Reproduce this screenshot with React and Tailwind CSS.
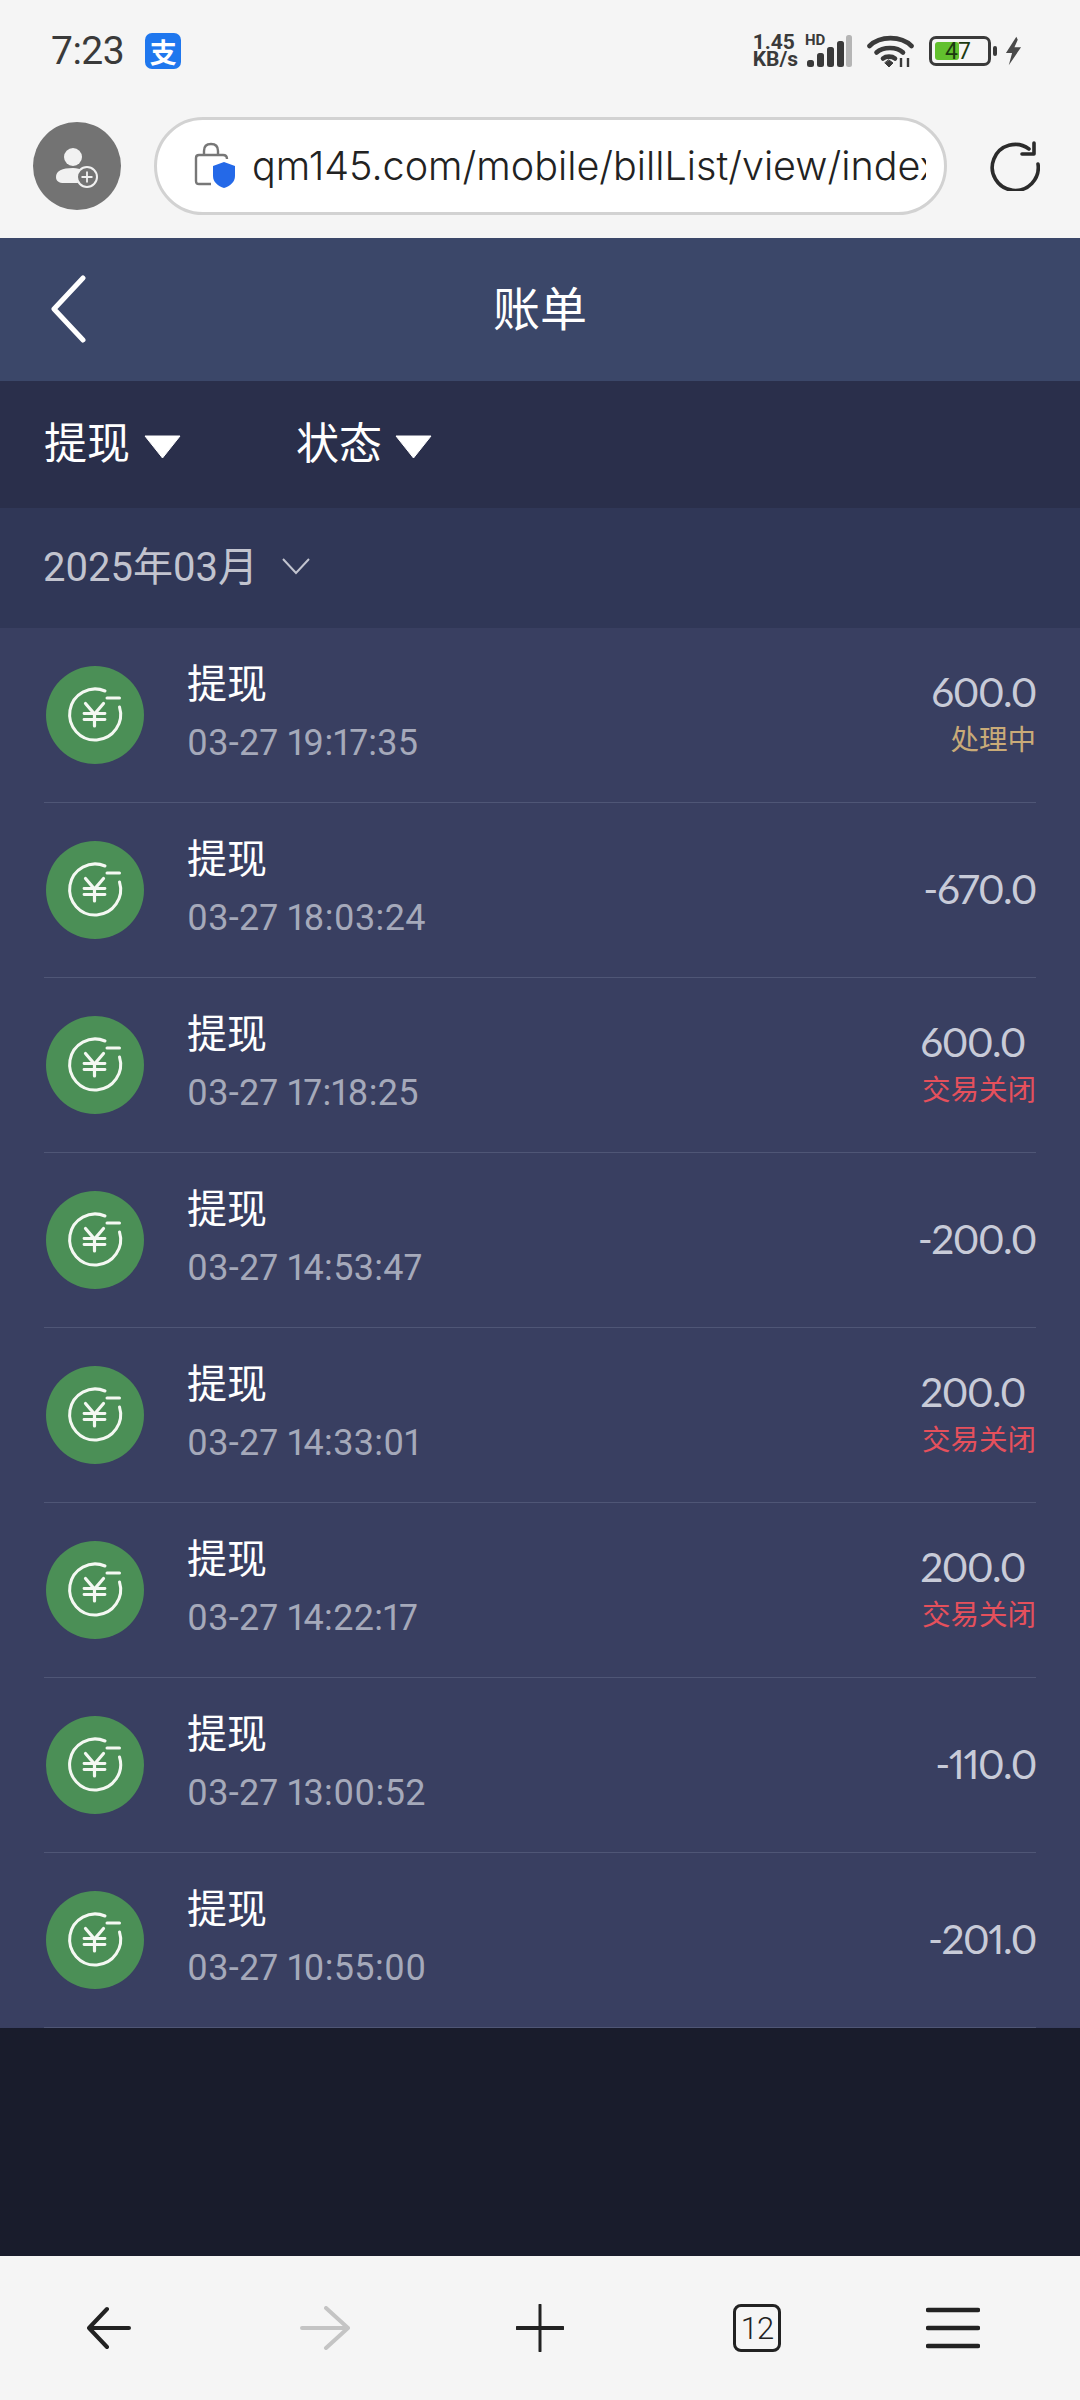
const rows = [
  { t: "03-27 19:17:35", a: "600.0", s: "处理中", c: "text-[#c9ab78]" },
  { t: "03-27 18:03:24", a: "-670.0" },
  { t: "03-27 17:18:25", a: "600.0", s: "交易关闭", c: "text-[#e5505c]", shift: true },
  { t: "03-27 14:53:47", a: "-200.0" },
  { t: "03-27 14:33:01", a: "200.0", s: "交易关闭", c: "text-[#e5505c]", shift: true },
  { t: "03-27 14:22:17", a: "200.0", s: "交易关闭", c: "text-[#e5505c]", shift: true },
  { t: "03-27 13:00:52", a: "-110.0" },
  { t: "03-27 10:55:00", a: "-201.0" },
];

function YuanIcon() {
  return (
    <div className="w-[98px] h-[98px] rounded-full bg-[#4b8f56] flex items-center justify-center shrink-0">
      <svg width="98" height="98" viewBox="0 0 98 98" fill="none" stroke="#f4f8f2" strokeLinecap="round">
        <path d="M59 25 A25.5 25.5 0 1 0 73.5 41" strokeWidth="3" />
        <path d="M61 32 H73.5" strokeWidth="3" />
        <path d="M39.5 37.5 L48.5 48 L57.5 37.5 M48.5 48 V60" strokeWidth="3.2" />
        <path d="M38 47.5 H59 M38 53.5 H59" strokeWidth="2.8" />
      </svg>
    </div>
  );
}

function Row({ r }) {
  return (
    <div className="h-[175px] border-b border-[#4f5676] flex items-center">
      <div className="pl-[2px] w-[143px] shrink-0">
        <YuanIcon />
      </div>
      <div className="flex-1 -mt-[2px]">
        <div className="text-[40px] leading-[58px] text-white">提现</div>
        <div className="text-[36px] leading-[58px] text-[#a5a9ba] proportional-nums tracking-[0.3px]">{r.t}</div>
      </div>
      <div className={`flex flex-col items-end ${r.s ? "mt-[2px]" : "-mt-[2px]"}`}>
        <div className={`text-[40.5px] leading-[46px] text-[#c8cbd8] font-['Lato',sans-serif] proportional-nums tracking-[-1.4px] ${r.shift ? "pr-[11px]" : ""}`}>{r.a}</div>
        {r.s && <div className={`mt-[3px] text-[28.5px] leading-[46px] ${r.c}`}>{r.s}</div>}
      </div>
    </div>
  );
}

function Tri() {
  return <svg className="block" width="37" height="24" viewBox="0 0 37 24"><path d="M1 1 H36 L18.5 23 Z" fill="#fff" stroke="#fff" strokeWidth="1" strokeLinejoin="round" /></svg>;
}

export default function App() {
  return (
    <div className="w-[1080px] h-[2400px] flex flex-col bg-[#191c2c] overflow-hidden font-['Roboto','Noto_Sans_CJK_SC',sans-serif]">
      {/* status bar */}
      <div className="h-[102px] bg-[#f5f5f5] flex items-center pl-[51px] shrink-0">
        <span className="text-[39px] leading-none text-[#3a3a3a] tracking-[-0.5px]">7:23</span>
        <div className="ml-[21px] w-[36px] h-[36px] rounded-[7px] bg-[#1f77ee] flex items-center justify-center text-white text-[27px] leading-none font-bold font-['Noto_Sans_CJK_SC',sans-serif]">支</div>
        <div className="ml-auto flex items-center mr-[58px]">
          <div className="flex flex-col text-[#3a3a3a] font-bold text-[21px] leading-[17px] items-start">
            <span>1.45</span>
            <span>KB/s</span>
          </div>
          <div className="relative ml-[7px] w-[48px] h-[34px]">
            <span className="absolute left-0 -top-[1px] text-[15px] leading-none font-bold text-[#3a3a3a]">HD</span>
            <svg className="absolute left-0 top-0" width="48" height="34" viewBox="0 0 48 34">
              <rect x="2" y="26" width="7" height="7" rx="2.5" fill="#3a3a3a" />
              <rect x="12" y="19" width="7" height="14" rx="2.5" fill="#3a3a3a" />
              <rect x="22" y="13" width="7" height="20" rx="2.5" fill="#3a3a3a" />
              <rect x="32" y="7" width="7" height="26" rx="2.5" fill="#3a3a3a" />
              <rect x="41" y="1" width="6" height="32" rx="2.5" fill="#b5b5b5" />
            </svg>
          </div>
          <svg className="ml-[14px]" width="47" height="34" viewBox="0 0 47 34" fill="none" stroke="#3a3a3a" strokeWidth="4.6" strokeLinecap="round">
            <path d="M2.5 12 C13 1.5 34 1.5 44.5 12" />
            <path d="M9.5 18.5 C16 12.5 30 12.5 36 18.5" />
            <path d="M16 24.5 C19 22 25 22 28 24.5" />
            <path d="M18 29 L22 33 L26 29 L22 26 Z" fill="#3a3a3a" strokeWidth="1" />
            <path d="M34 24 V33 M41 24 V33" strokeWidth="2.4" strokeLinecap="butt" />
          </svg>
          <div className="ml-[15px] relative w-[62px] h-[30px] rounded-[7px] border-[3px] border-[#3a3a3a] flex items-center justify-center overflow-hidden">
            <div className="absolute left-[3px] top-[3px] bottom-[3px] w-[24px] bg-[#62c02e] rounded-[3px]" />
            <span className="relative text-[23px] leading-none text-[#1c3a10] -ml-[4px]">47</span>
          </div>
          <div className="ml-[2px] w-[4px] h-[10px] rounded-[2px] bg-[#3a3a3a]" />
          <svg className="ml-[8px]" width="17" height="30" viewBox="0 0 18 30">
            <path d="M12 0 L1 17 H7.5 L4 30 L17 11 H10 L13.5 3 Z" fill="#4a4a4a" />
          </svg>
        </div>
      </div>

      {/* url bar */}
      <div className="h-[136px] bg-[#f5f5f5] flex items-center pl-[33px] pb-[9px] shrink-0">
        <div className="w-[88px] h-[88px] rounded-full bg-[#737373] flex items-center justify-center shrink-0">
          <svg width="48" height="44" viewBox="0 0 48 44">
            <circle cx="20" cy="13" r="9" fill="#f1f1f1" />
            <path d="M3 33 C3 27 9 24 20 24 C24 24 27 25 30 26 C26 29 24 34 25 39 H11 C6 39 3 37 3 33 Z" fill="#f1f1f1" />
            <circle cx="34" cy="33" r="10" fill="#737373" stroke="#f1f1f1" strokeWidth="2" />
            <path d="M34 27.5 V38.5 M28.5 33 H39.5" stroke="#f1f1f1" strokeWidth="1.8" />
          </svg>
        </div>
        <div className="ml-[33px] w-[793px] h-[98px] rounded-full bg-white border-[3px] border-[#d2d2d2] flex items-center pl-[37px] pr-[18px] shrink-0">
          <svg className="shrink-0" width="44" height="48" viewBox="0 0 44 48" fill="none">
            <path d="M10 13 V9 C10 4 13 2 17 2 C21 2 24 4 24 9 V13" stroke="#777" strokeWidth="2.4" />
            <path d="M17 42 H5 C3 42 2 41 2 39 V16 C2 14 3 13 5 13 H29 C32 13 33 14 33 17" stroke="#777" strokeWidth="2.4" />
            <path d="M30 20 L41 24 V34 C41 40 36 44 30 46 C24 44 19 40 19 34 V24 Z" fill="#2469e8" />
          </svg>
          <div className="ml-[14px] min-w-0 flex-1 text-[39.5px] leading-[48px] text-[#222] whitespace-nowrap overflow-hidden font-['Inter',sans-serif] font-light">qm145.com/mobile/billList/view/index</div>
        </div>
        <svg className="ml-[43px]" width="50" height="50" viewBox="0 0 50 50" fill="none" stroke="#2b2b2b" strokeWidth="3.6" strokeLinecap="round" strokeLinejoin="round">
          <path d="M39 8 A23 23 0 1 0 48 23" />
          <path d="M32 13 H44 V2" />
        </svg>
      </div>

      {/* header */}
      <div className="h-[143px] bg-[#3b4769] flex items-center justify-center relative shrink-0">
        <svg className="absolute left-[51px] top-[37px]" width="36" height="68" viewBox="0 0 36 68" fill="none" stroke="#fff" strokeWidth="5" strokeLinecap="round" strokeLinejoin="round">
          <path d="M32 3 L3 34 L32 65" />
        </svg>
        <span className="text-[47px] leading-none text-white">账单</span>
      </div>

      {/* filters */}
      <div className="h-[127px] bg-[#2a2f4b] flex items-center pl-[44px] shrink-0">
        <span className="text-[43px] leading-none text-white">提现</span>
        <span className="ml-[14px] mt-[4px]"><Tri /></span>
        <span className="ml-[115px] text-[43px] leading-none text-white">状态</span>
        <span className="ml-[13px] mt-[4px]"><Tri /></span>
      </div>

      {/* month */}
      <div className="h-[120px] bg-[#303757] flex items-center pl-[43px] shrink-0">
        <span className="text-[40px] leading-none text-[#c2c4cf]">2025年03月</span>
        <svg className="ml-[24px] -mt-[4px]" width="28" height="18" viewBox="0 0 28 18" fill="none" stroke="#c2c4cf" strokeWidth="2">
          <path d="M1 2 L14 16 L27 2" />
        </svg>
      </div>

      {/* list */}
      <div className="bg-[#393f61] px-[44px] shrink-0">
        {rows.map((r) => (
          <Row key={r.t} r={r} />
        ))}
      </div>

      <div className="flex-1" />

      {/* bottom nav */}
      <div className="h-[144px] bg-[#f5f5f5] flex items-center pl-[87px] shrink-0">
        <svg width="44" height="44" viewBox="0 0 44 44" fill="none" stroke="#222" strokeWidth="4" strokeLinecap="round" strokeLinejoin="round">
          <path d="M20 3 L2 22 L20 41 M2 22 H42" />
        </svg>
        <svg className="ml-[169px]" width="50" height="44" viewBox="0 0 50 44" fill="none" stroke="#c4c4c4" strokeWidth="4" strokeLinecap="round" strokeLinejoin="round">
          <path d="M26 2 L48 22 L26 42 M2 22 H48" />
        </svg>
        <svg className="ml-[166px]" width="48" height="48" viewBox="0 0 48 48" fill="none" stroke="#222" strokeLinecap="round">
          <path d="M24 1 V47" strokeWidth="3" />
          <path d="M1 24 H47" strokeWidth="4" />
        </svg>
        <div className="ml-[169px] w-[48px] h-[48px] rounded-[8px] border-[3.5px] border-[#222] flex items-center justify-center text-[31px] leading-none text-[#222] font-light tracking-[-1px]">12</div>
        <svg className="ml-[145px]" width="54" height="42" viewBox="0 0 54 42" fill="none" stroke="#222" strokeWidth="4.5" strokeLinecap="round">
          <path d="M2 3 H52 M2 21 H52 M2 39 H52" />
        </svg>
      </div>
    </div>
  );
}
